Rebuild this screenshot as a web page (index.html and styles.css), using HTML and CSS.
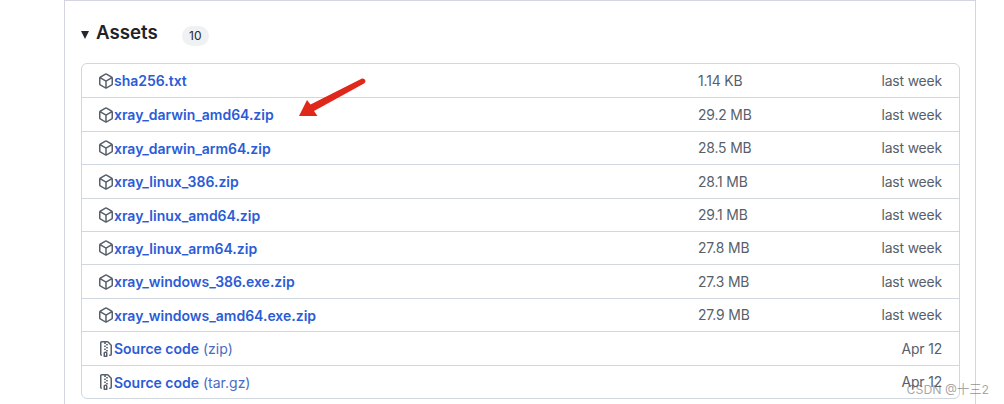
FILE: index.html
```html
<!DOCTYPE html>
<html lang="en">
<head>
<meta charset="utf-8">
<title>Assets</title>
<link rel="stylesheet" href="styles.css">
</head>
<body>
<svg width="0" height="0" class="defs">
  <symbol id="pkg" viewBox="0 0 16 16"><path d="m8.878.392 5.25 3.045c.54.314.872.89.872 1.514v6.098a1.75 1.75 0 0 1-.872 1.514l-5.25 3.045a1.75 1.75 0 0 1-1.756 0l-5.25-3.045A1.75 1.75 0 0 1 1 11.049V4.951c0-.624.332-1.201.872-1.514L7.122.392a1.75 1.75 0 0 1 1.756 0ZM7.875 1.69l-4.63 2.685L8 7.133l4.755-2.758-4.63-2.685a.248.248 0 0 0-.25 0ZM2.5 5.677v5.372c0 .09.047.171.125.216l4.625 2.683V8.432Zm6.25 8.271 4.625-2.683a.25.25 0 0 0 .125-.216V5.677L8.75 8.432Z"/></symbol>
  <symbol id="zip" viewBox="0 0 16 16"><path d="M3.5 1.75v11.5c0 .09.048.173.126.217a.75.75 0 0 1-.752 1.298A1.748 1.748 0 0 1 2 13.25V1.75C2 .784 2.784 0 3.75 0h5.586c.464 0 .909.185 1.237.513l2.914 2.914c.329.328.513.773.513 1.237v8.586A1.75 1.75 0 0 1 12.25 15h-.5a.75.75 0 0 1 0-1.5h.5a.25.25 0 0 0 .25-.25V4.664a.25.25 0 0 0-.073-.177L9.513 1.573a.25.25 0 0 0-.177-.073H7.25a.75.75 0 0 1 0 1.5h-.5a.75.75 0 0 1 0-1.5h-3a.25.25 0 0 0-.25.25Zm3.75 8.75h.5c.966 0 1.75.784 1.75 1.75v3a.75.75 0 0 1-.75.75h-2.5a.75.75 0 0 1-.75-.75v-3c0-.966.784-1.75 1.75-1.75ZM6 5.25a.75.75 0 0 1 .75-.75h.5a.75.75 0 0 1 0 1.5h-.5A.75.75 0 0 1 6 5.25Zm.75 2.25h.5a.75.75 0 0 1 0 1.5h-.5a.75.75 0 0 1 0-1.5ZM8 6.75A.75.75 0 0 1 8.75 6h.5a.75.75 0 0 1 0 1.5h-.5A.75.75 0 0 1 8 6.75ZM8.75 3h.5a.75.75 0 0 1 0 1.5h-.5a.75.75 0 0 1 0-1.5ZM8 9.75A.75.75 0 0 1 8.75 9h.5a.75.75 0 0 1 0 1.5h-.5A.75.75 0 0 1 8 9.75Zm-1 2.5v2.25h1v-2.25a.25.25 0 0 0-.25-.25h-.5a.25.25 0 0 0-.25.25Z"/></symbol>
</svg>
<main class="card">
  <div class="head">
    <span class="caret"></span>
    <h2 class="title">Assets</h2>
    <span class="count">10</span>
  </div>
  <div class="list">
    <div class="row"><div class="name"><svg class="icon"><use href="#pkg"/></svg><a class="link">sha256.txt</a></div><span class="size">1.14 KB</span><span class="date">last week</span></div>
    <div class="row"><div class="name"><svg class="icon"><use href="#pkg"/></svg><a class="link">xray_darwin_amd64.zip</a></div><span class="size">29.2 MB</span><span class="date">last week</span></div>
    <div class="row"><div class="name"><svg class="icon"><use href="#pkg"/></svg><a class="link">xray_darwin_arm64.zip</a></div><span class="size">28.5 MB</span><span class="date">last week</span></div>
    <div class="row"><div class="name"><svg class="icon"><use href="#pkg"/></svg><a class="link">xray_linux_386.zip</a></div><span class="size">28.1 MB</span><span class="date">last week</span></div>
    <div class="row"><div class="name"><svg class="icon"><use href="#pkg"/></svg><a class="link">xray_linux_amd64.zip</a></div><span class="size">29.1 MB</span><span class="date">last week</span></div>
    <div class="row"><div class="name"><svg class="icon"><use href="#pkg"/></svg><a class="link">xray_linux_arm64.zip</a></div><span class="size">27.8 MB</span><span class="date">last week</span></div>
    <div class="row"><div class="name"><svg class="icon"><use href="#pkg"/></svg><a class="link">xray_windows_386.exe.zip</a></div><span class="size">27.3 MB</span><span class="date">last week</span></div>
    <div class="row"><div class="name"><svg class="icon"><use href="#pkg"/></svg><a class="link">xray_windows_amd64.exe.zip</a></div><span class="size">27.9 MB</span><span class="date">last week</span></div>
    <div class="row"><div class="name"><svg class="icon"><use href="#zip"/></svg><a class="link">Source code</a><span class="ext">(zip)</span></div><span class="size"></span><span class="date">Apr 12</span></div>
    <div class="row"><div class="name"><svg class="icon"><use href="#zip"/></svg><a class="link">Source code</a><span class="ext">(tar.gz)</span></div><span class="size"></span><span class="date">Apr 12</span></div>
  </div>
</main>
<svg class="arrow" viewBox="0 0 80 50" width="80" height="50"><path d="M4 44 12 28 15.5 32.5 67 6.5Q70 6 70.5 9 70.5 10 69 11.5L19 39 22.5 44Z" fill="#e0281a"/></svg>
<span class="mark">CSDN @十三2</span>
</body>
</html>
```
FILE: styles.css
```css
html, body {
  margin: 0;
  padding: 0;
  height: 404px;
  overflow: hidden;
  background: #fff;
}
body {
  padding-left: 64px;
  box-sizing: border-box;
  font-family: Inter, "Liberation Sans", "Noto Sans CJK SC", sans-serif;
  position: relative;
}
.defs { position: absolute; }
.card {
  width: 912px;
  height: 420px;
  box-sizing: border-box;
  border: 1px solid #d3d6e0;
  padding: 0 15px 0 16px;
}
.head {
  display: flex;
  align-items: center;
  height: 62px;
}
.caret {
  width: 0;
  height: 0;
  border-left: 4px solid transparent;
  border-right: 4px solid transparent;
  border-top: 8px solid #24292f;
  margin-top: 6px;
  margin-right: 7px;
}
.title {
  margin: 2px 0 0;
  font-size: 18.7px;
  font-weight: 600;
  color: #1f2328;
  line-height: 24px;
}
.count {
  margin-left: 24px;
  margin-top: 8px;
  width: 27px;
  height: 20px;
  border-radius: 10px;
  background: #eff1f3;
  color: #24292f;
  font-size: 12px;
  line-height: 20px;
  text-align: center;
}
.list {
  border: 1px solid #d0d7de;
  border-radius: 6px;
  box-sizing: border-box;
  height: 336px;
  display: grid;
  grid-template-rows: repeat(10, 1fr);
}
.row {
  display: grid;
  grid-template-columns: 600px 1fr auto;
  align-items: center;
  padding: 0.6px 17px 0 16px;
  border-top: 1px solid #d0d7de;
  min-height: 0;
}
.row:first-child { border-top: 0; }
.name {
  display: flex;
  align-items: center;
}
.icon {
  width: 16px;
  height: 16px;
  fill: #57606a;
  flex: none;
}
.link {
  color: #2b5cd6;
  font-size: 14px;
  font-weight: 600;
  letter-spacing: -0.01px;
}
.ext {
  color: #4a6bbf;
  font-size: 14px;
  margin-left: 4px;
}
.size, .date {
  color: #57606a;
  font-size: 13.9px;
  letter-spacing: -0.15px;
}
.arrow {
  position: absolute;
  left: 295px;
  top: 72px;
}
.mark {
  position: absolute;
  right: 15px;
  top: 382px;
  font-size: 12.3px;
  line-height: 15px;
  color: rgba(90, 90, 90, 0.55);
}
```
